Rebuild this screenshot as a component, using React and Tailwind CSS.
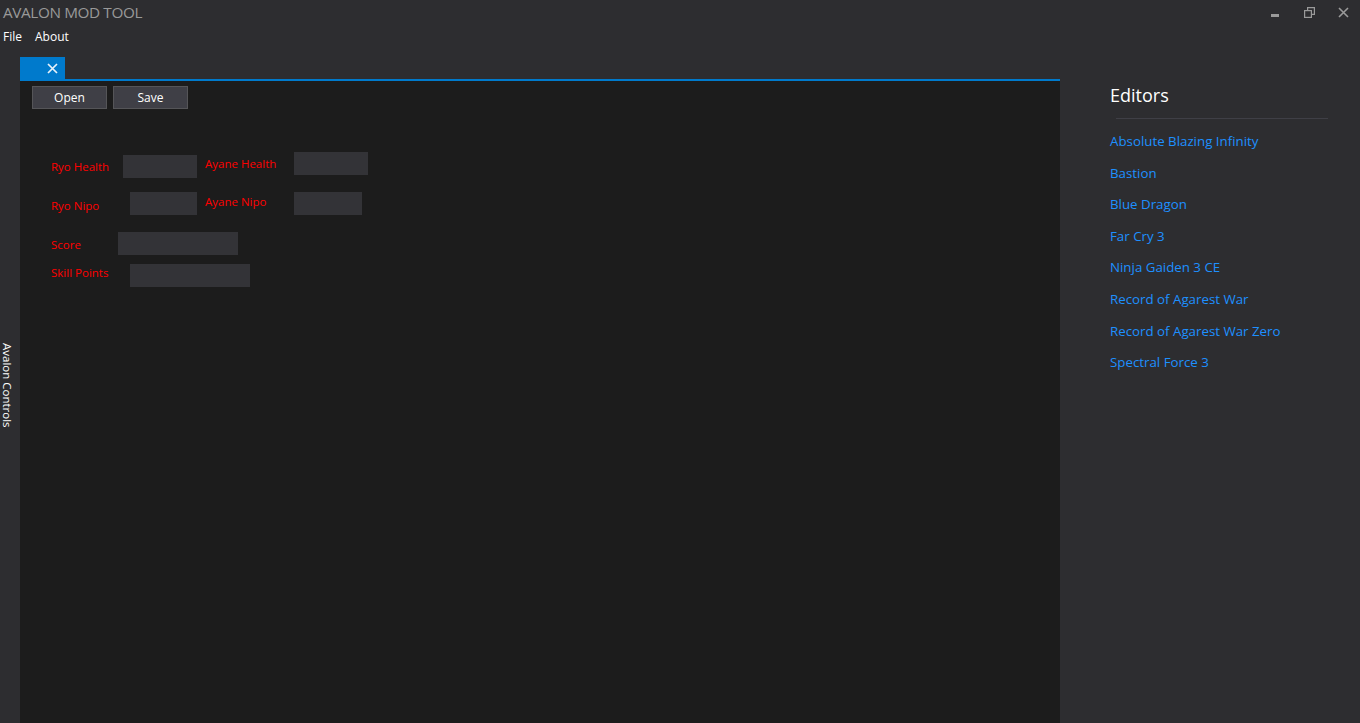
const editors = [
  "Absolute Blazing Infinity",
  "Bastion",
  "Blue Dragon",
  "Far Cry 3",
  "Ninja Gaiden 3 CE",
  "Record of Agarest War",
  "Record of Agarest War Zero",
  "Spectral Force 3",
];

function Field({ w }) {
  return <div className={`h-[23px] bg-[#333337] ${w}`} />;
}

function Label({ children, className = "" }) {
  return <span className={`text-[11.5px] text-[#ff0000] leading-none ${className}`}>{children}</span>;
}

export default function App() {
  return (
    <div
      className="w-[1360px] h-[723px] bg-[#2d2d30] flex flex-col overflow-hidden select-none"
      style={{ fontFamily: '"Open Sans", "Noto Sans", sans-serif' }}
    >
      {/* title bar */}
      <div className="h-[25px] flex items-center justify-between pl-[3px]">
        <span className="text-[15.3px] text-[#999999] tracking-tight leading-none">AVALON MOD TOOL</span>
        <div className="flex items-center h-full">
          <div className="w-[34px] flex justify-center">
            <div className="w-[8px] h-[3px] bg-[#9a9a9a] mt-[5px]" />
          </div>
          <div className="w-[34px] flex justify-center">
            <svg width="11" height="11" viewBox="0 0 11 11" fill="none" stroke="#9a9a9a" strokeWidth="1.2">
              <rect x="0.6" y="3.6" width="6.8" height="6.8" />
              <path d="M3.6 3.6V0.6h6.8v6.8H7.4" />
            </svg>
          </div>
          <div className="w-[34px] flex justify-center">
            <svg width="11" height="11" viewBox="0 0 11 11" stroke="#9a9a9a" strokeWidth="1.6">
              <path d="M1 1l9 9M10 1l-9 9" />
            </svg>
          </div>
        </div>
      </div>

      {/* menu */}
      <div className="h-[23px] flex items-center gap-[13px] pl-[3px] text-[12px] text-white">
        <span>File</span>
        <span>About</span>
      </div>

      <div className="flex flex-1 min-h-0">
        {/* left strip */}
        <div className="w-[20px] flex items-center justify-start">
          <span className="[writing-mode:vertical-rl] text-[11.5px] text-white leading-none ml-[1px]">Avalon Controls</span>
        </div>

        {/* document area */}
        <div className="w-[1040px] flex flex-col pt-[9px]">
          <div className="flex">
            <div className="w-[45px] h-[22px] bg-[#007acc] flex items-center justify-end pr-[7px]">
              <svg width="11" height="11" viewBox="0 0 11 11" stroke="#e8f2fa" strokeWidth="1.7">
                <path d="M1 1l9 9M10 1l-9 9" />
              </svg>
            </div>
          </div>
          <div className="h-[2px] bg-[#007acc]" />
          <div className="flex-1 bg-[#1c1c1c] pl-[12px] pt-[5px]">
            <div className="flex gap-[6px]">
              <button className="w-[75px] h-[23px] bg-[#3f3f46] border border-[#555558] text-white text-[12px]">Open</button>
              <button className="w-[75px] h-[23px] bg-[#3f3f46] border border-[#555558] text-white text-[12px]">Save</button>
            </div>

            <div className="flex mt-[43px] ml-[19px]">
              <div className="flex items-start">
                <Label className="w-[72px] mt-[9px]">Ryo Health</Label>
                <Field w="w-[74px] mt-[3px]" />
              </div>
              <div className="flex items-start ml-[8px]">
                <Label className="w-[89px] mt-[6px]">Ayane Health</Label>
                <Field w="w-[74px]" />
              </div>
            </div>

            <div className="flex mt-[14px] ml-[19px]">
              <div className="flex items-start">
                <Label className="w-[79px] mt-[8px]">Ryo Nipo</Label>
                <Field w="w-[67px]" />
              </div>
              <div className="flex items-start ml-[8px]">
                <Label className="w-[89px] mt-[4px]">Ayane Nipo</Label>
                <Field w="w-[68px]" />
              </div>
            </div>

            <div className="flex items-start mt-[17px] ml-[19px]">
              <Label className="w-[67px] mt-[7px]">Score</Label>
              <Field w="w-[120px]" />
            </div>

            <div className="flex items-start mt-[9px] ml-[19px]">
              <Label className="w-[79px] mt-[3px]">Skill Points</Label>
              <Field w="w-[120px]" />
            </div>
          </div>
        </div>

        {/* right panel */}
        <div className="flex-1 pl-[50px] pr-[32px] pt-[38px]">
          <div className="text-[18px] text-white leading-none">Editors</div>
          <div className="h-px bg-[#3f3f46] mt-[14px] ml-[6px]" />
          <div className="flex flex-col mt-[16px]">
            {editors.map((e) => (
              <div key={e} className="h-[31.6px] text-[13.3px] text-[#1e90ff] leading-none">
                {e}
              </div>
            ))}
          </div>
        </div>
      </div>
    </div>
  );
}
